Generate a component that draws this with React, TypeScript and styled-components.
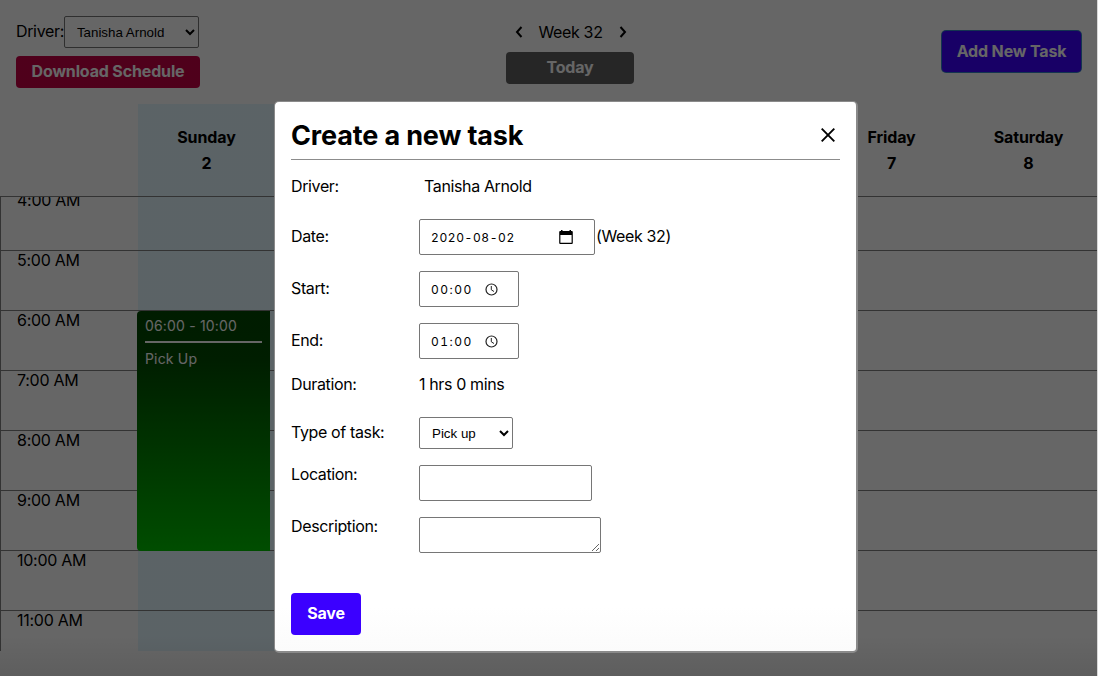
import React from "react";
import styled, { createGlobalStyle } from "styled-components";

const GlobalStyle = createGlobalStyle`
  * { box-sizing: border-box; }
  html, body { margin: 0; padding: 0; overflow: hidden; background: #fff; }
  body { font-family: Inter, "Liberation Sans", sans-serif; font-size: 16px; line-height: 19px; color: #000; }
`;

const Page = styled.div`
  position: relative;
  width: 1098px;
  height: 676px;
  overflow: hidden;
  background: #fff;
  border-right: 1px solid #d8d8d8;
`;

const Toolbar = styled.header`
  display: flex;
  justify-content: space-between;
  align-items: flex-start;
  height: 104px;
  padding: 16px 15px 0 16px;
`;

const DriverArea = styled.div`
  display: flex;
  flex-direction: column;
  align-items: flex-start;
  gap: 8px;
  width: 348px;
`;

const DriverPicker = styled.label`
  display: flex;
  align-items: center;
  height: 32px;
  letter-spacing: -0.35px;
`;

const PickerLabel = styled.span`
  padding-bottom: 2px;
`;

const Select = styled.select<{ $width: number }>`
  width: ${(p) => p.$width}px;
  height: 32px;
  padding: 0 0 0 8px;
  border: 1px solid #767676;
  border-radius: 2px;
  background-color: #fff;
  color: #000;
  font: 13.33px "Liberation Sans", sans-serif;
`;

const Button = styled.button<{ $bg: string; $w: number; $h: number; $ring?: boolean }>`
  display: flex;
  align-items: center;
  justify-content: center;
  width: ${(p) => p.$w}px;
  height: ${(p) => p.$h}px;
  padding: 0 0 ${(p) => (p.$ring ? 0 : 2)}px;
  border: 0;
  border-radius: 4px;
  background: ${(p) => p.$bg};
  box-shadow: ${(p) => (p.$ring ? "0 0 0 1px #3282c8" : "none")};
  color: #fff;
  font: 650 16px/19px Inter, sans-serif;
  letter-spacing: -0.15px;
  white-space: nowrap;
`;

const WeekArea = styled.div`
  display: flex;
  flex-direction: column;
  gap: 4px;
  width: 128px;
`;

const WeekNav = styled.div`
  display: flex;
  align-items: center;
  justify-content: space-between;
  height: 32px;
  padding: 0 4px 0 5px;
  letter-spacing: -0.35px;
`;

const AddArea = styled.div`
  display: flex;
  justify-content: flex-end;
  width: 306px;
  padding: 15px 1px 0 0;
`;

const Days = styled.div`
  display: grid;
  grid-template-columns: 138px repeat(7, 137px);
  height: 92px;
`;

const Day = styled.div<{ $today?: boolean }>`
  display: flex;
  flex-direction: column;
  align-items: center;
  gap: 7px;
  padding-top: 24px;
  background: ${(p) => (p.$today ? "#e4f7ff" : "transparent")};
  font-weight: 650;
  letter-spacing: -0.1px;
`;

const Hours = styled.div`
  height: 455px;
  overflow: hidden;
  border-top: 1px solid #7f7f7f;
  border-left: 1px solid #7f7f7f;
`;

const HourList = styled.div`
  margin-top: -7px;
`;

const Hour = styled.div`
  display: grid;
  grid-template-columns: 137px repeat(7, 137px);
  height: 60px;
  border-top: 1px solid #7f7f7f;
`;

const HourLabel = styled.div`
  padding-left: 16px;
  letter-spacing: -0.27px;
`;

const Slot = styled.div<{ $today?: boolean }>`
  position: relative;
  background: ${(p) => (p.$today ? "#e4f7ff" : "transparent")};
`;

const TaskCard = styled.div`
  position: absolute;
  z-index: 1;
  top: 0;
  left: -1px;
  width: 133px;
  height: 240px;
  padding: 5px 8px;
  border-radius: 4px 0 0 4px;
  background: linear-gradient(#004600, #004a00 20%, #00c000);
  color: #fff;
  font-size: 14px;
  letter-spacing: 0.17px;
`;

const TaskTime = styled.div`
  height: 27px;
  border-bottom: 2px solid #fff;
  margin-bottom: 6px;
`;

const Backdrop = styled.div`
  position: absolute;
  z-index: 2;
  inset: 0;
  display: flex;
  justify-content: center;
  align-items: flex-start;
  padding: 101px 0 0 35px;
  background: linear-gradient(rgba(0, 0, 0, 0.6) 94%, rgba(0, 0, 0, 0.63));
`;

const Dialog = styled.section`
  width: 584px;
  height: 552px;
  padding: 16px 16px 0;
  border: 1px solid #8a8a8a;
  border-width: 1px 2px 2px 1px;
  border-radius: 5px;
  background: linear-gradient(#fff 92%, #fbfbfb);
`;

const DialogHead = styled.div`
  display: flex;
  justify-content: space-between;
  align-items: center;
  height: 42px;
  padding: 0 4px 6px 0;
  border-bottom: 1px solid #8c8c8c;
`;

const Title = styled.h2`
  margin: 0;
  font-size: 27px;
  line-height: 34px;
  font-weight: 700;
  letter-spacing: -0.15px;
`;

const CloseButton = styled.span`
  display: flex;
  padding-bottom: 2px;
`;

const Form = styled.form`
  display: flex;
  flex-direction: column;
  align-items: flex-start;
  gap: 16px;
  padding-top: 17px;
`;

const FormRow = styled.div<{ $h: number; $center?: boolean }>`
  display: grid;
  grid-template-columns: 128px auto;
  align-items: ${(p) => (p.$center ? "center" : "start")};
  height: ${(p) => p.$h}px;
  letter-spacing: -0.37px;

  > span, > div > span {
    padding-bottom: ${(p) => (p.$center ? 2 : 0)}px;
  }
`;

const Inline = styled.div<{ $indent?: number }>`
  display: flex;
  align-items: center;
  gap: 1px;
  padding-left: ${(p) => p.$indent ?? 0}px;
`;

const PickerField = styled.div<{ $width: number; $end: number; $spacing: number }>`
  display: flex;
  align-items: center;
  justify-content: space-between;
  width: ${(p) => p.$width}px;
  height: 36px;
  padding: 1px ${(p) => p.$end}px 0 11px;
  border: 1px solid #767676;
  border-radius: 2px;
  font-size: 12px;
  font-variant-numeric: tabular-nums;
  letter-spacing: ${(p) => p.$spacing}px;
`;

const TextInput = styled.input`
  width: 173px;
  height: 36px;
  border: 1px solid #767676;
  border-radius: 2px;
`;

const TextArea = styled.textarea`
  width: 182px;
  height: 36px;
  border: 1px solid #767676;
  border-radius: 2px;
`;

const SaveArea = styled.div`
  padding-top: 24px;
`;

const Chevron = ({ d }: { d: string }) => (
  <svg width="16" height="16" viewBox="0 0 16 16" fill="none" stroke="#000" strokeWidth="2">
    <path d={d} />
  </svg>
);

const CloseIcon = () => (
  <svg width="16" height="16" viewBox="0 0 16 16" fill="none" stroke="#000" strokeWidth="1.9">
    <path d="M1.700 1.700 14.300 14.300M14.300 1.700 1.700 14.300" />
  </svg>
);

const CalendarIcon = () => (
  <svg width="14" height="15" viewBox="0 0 14 15">
    <path d="M2 0h1.500v1h7V0H12v1h.8a1 1 0 0 1 1 1v11a1 1 0 0 1-1 1H1.200a1 1 0 0 1-1-1V2a1 1 0 0 1 1-1H2zM1.400 5v7.800h11.200V5z" fillRule="evenodd" />
  </svg>
);

const ClockIcon = () => (
  <svg width="13" height="13" viewBox="0 0 13 13" fill="none" stroke="#222" strokeWidth="1.2">
    <circle cx="6.5" cy="6.5" r="5.5" />
    <path d="M6.3 3v3.8L9 8.5" strokeWidth="1" />
  </svg>
);

// Monday to Thursday sit behind the dialog and carry no heading.
const days = [
  { date: 2, name: "Sunday" },
  { date: 3 },
  { date: 4 },
  { date: 5 },
  { date: 6 },
  { date: 7, name: "Friday" },
  { date: 8, name: "Saturday" },
];
const hours = [4, 5, 6, 7, 8, 9, 10, 11];

export default function App() {
  return (
    <>
      <GlobalStyle />
      <Page>
        <Toolbar>
          <DriverArea>
            <DriverPicker>
              <PickerLabel>Driver:</PickerLabel>
              <Select $width={135}>
                <option>Tanisha Arnold</option>
              </Select>
            </DriverPicker>
            <Button $bg="#c50044" $w={184} $h={32}>Download Schedule</Button>
          </DriverArea>
          <WeekArea>
            <WeekNav>
              <Chevron d="M10.500 3 6 8l4.500 5" />
              <span>Week 32</span>
              <Chevron d="M6.500 3l4.500 5-4.500 5" />
            </WeekNav>
            <Button $bg="#5f5f5f" $w={128} $h={32}>Today</Button>
          </WeekArea>
          <AddArea>
            <Button $bg="#3c00ff" $w={139} $h={41} $ring>Add New Task</Button>
          </AddArea>
        </Toolbar>
        <Days>
          <div />
          {days.map(({ name, date }) => (
            <Day key={date} $today={date === 2}>
              {name && <span>{name}</span>}
              {name && <span>{date}</span>}
            </Day>
          ))}
        </Days>
        <Hours>
          <HourList>
            {hours.map((hour) => (
              <Hour key={hour}>
                <HourLabel>{hour}:00 AM</HourLabel>
                {days.map(({ date }) => (
                  <Slot key={date} $today={date === 2}>
                    {hour === 6 && date === 2 && (
                      <TaskCard>
                        <TaskTime>06:00 - 10:00</TaskTime>
                        Pick Up
                      </TaskCard>
                    )}
                  </Slot>
                ))}
              </Hour>
            ))}
          </HourList>
        </Hours>
        <Backdrop>
          <Dialog>
            <DialogHead>
              <Title>Create a new task</Title>
              <CloseButton>
                <CloseIcon />
              </CloseButton>
            </DialogHead>
            <Form>
              <FormRow $h={26}>
                <span>Driver:</span>
                <Inline $indent={5}>Tanisha Arnold</Inline>
              </FormRow>
              <FormRow $h={36} $center>
                <span>Date:</span>
                <Inline>
                  <PickerField $width={176} $end={21} $spacing={0.6}>2020-08-02<CalendarIcon /></PickerField>
                  <span>(Week 32)</span>
                </Inline>
              </FormRow>
              <FormRow $h={36} $center>
                <span>Start:</span>
                <PickerField $width={100} $end={20} $spacing={1.5}>00:00<ClockIcon /></PickerField>
              </FormRow>
              <FormRow $h={36} $center>
                <span>End:</span>
                <PickerField $width={100} $end={20} $spacing={1.5}>01:00<ClockIcon /></PickerField>
              </FormRow>
              <FormRow $h={26}>
                <span>Duration:</span>
                <span>1 hrs 0 mins</span>
              </FormRow>
              <FormRow $h={32} $center>
                <span>Type of task:</span>
                <Select $width={94}>
                  <option>Pick up</option>
                </Select>
              </FormRow>
              <FormRow $h={36}>
                <span>Location:</span>
                <TextInput />
              </FormRow>
              <FormRow $h={36}>
                <span>Description:</span>
                <TextArea />
              </FormRow>
              <SaveArea>
                <Button type="button" $bg="#3b00ff" $w={70} $h={42}>Save</Button>
              </SaveArea>
            </Form>
          </Dialog>
        </Backdrop>
      </Page>
    </>
  );
}
